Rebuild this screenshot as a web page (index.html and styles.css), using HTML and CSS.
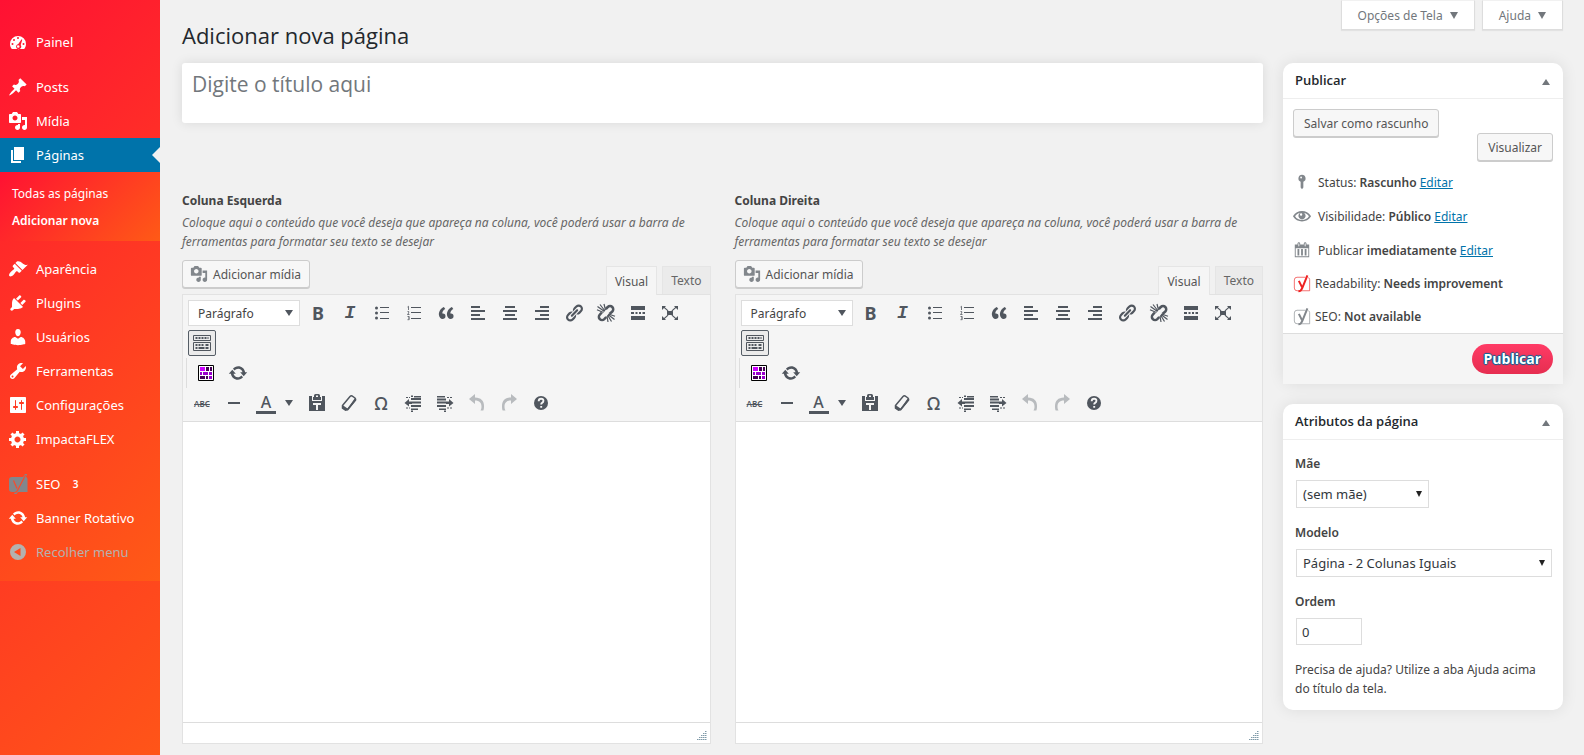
FILE: index.html
```html
<!DOCTYPE html>
<html lang="pt-BR">
<head>
<meta charset="utf-8">
<meta name="viewport" content="width=device-width, initial-scale=1">
<title>Adicionar nova página</title>
<link rel="stylesheet" href="styles.css">
</head>
<body>
<svg class="sprite" aria-hidden="true">
  <symbol id="i-dashboard" viewBox="0 0 20 20"><path fill-rule="evenodd" d="M3.8 17h12.4c1.3-1.600 1.800-3.400 1.800-5a8 8 0 1 0-16 0c0 1.600.5 3.400 1.800 5zM9 6a1 1 0 1 1 2 0 1 1 0 0 1-2 0zM5 8a1 1 0 1 1 2 0 1 1 0 0 1-2 0zM3.500 12a1 1 0 1 1 2 0 1 1 0 0 1-2 0zM14.500 12a1 1 0 1 1 2 0 1 1 0 0 1-2 0zM13.600 7.200l.7.500-1.600 5.200a2.600 2.600 0 1 1-2.400-.9zM10.200 13.200a1.300 1.300 0 1 0 .1 2.600 1.300 1.300 0 0 0-.1-2.600z"/></symbol>
  <symbol id="i-pin" viewBox="0 0 20 20"><path d="M10.440 3.020l1.820-1.820 6.360 6.350-1.830 1.820c-1.050-.68-2.480-.57-3.410.36l-.75.75c-.92.93-1.040 2.350-.35 3.410l-1.830 1.820-2.410-2.410-2.800 2.790c-.42.42-3.380 2.710-3.800 2.290s1.860-3.390 2.280-3.810l2.790-2.790L4.100 9.360l1.830-1.820c1.050.69 2.480.57 3.400-.36l.75-.75c.93-.92 1.050-2.350.36-3.410z"/></symbol>
  <symbol id="i-media" viewBox="0 0 20 20"><path d="M13 11V4c0-.55-.45-1-1-1h-1.670L9 1H5L3.670 3H2c-.55 0-1 .45-1 1v7c0 .55.45 1 1 1h10c.55 0 1-.45 1-1zM7 4.500c1.380 0 2.500 1.120 2.500 2.500S8.380 9.500 7 9.500 4.500 8.380 4.500 7 5.620 4.500 7 4.500zM14 6h5v10.500c0 1.380-1.120 2.500-2.500 2.500S14 17.880 14 16.500s1.120-2.500 2.500-2.500c.17 0 .34.02.5.05V9h-3V6zm-4 8.050V13h2v3.500c0 1.380-1.120 2.500-2.500 2.500S7 17.880 7 16.500 8.120 14 9.500 14c.17 0 .34.02.5.05z"/></symbol>
  <symbol id="i-page" viewBox="0 0 20 20"><path d="M6 15V2h10v13H6zm-1 1h8v2H3V5h2v11z"/></symbol>
  <symbol id="i-brush" viewBox="0 0 20 20"><path d="M14.480 11.060L7.410 3.990l1.500-1.500c.5-.56 2.300-.47 3.510.32 1.210.8 1.430 1.280 2.910 2.100 1.180.64 2.450 1.260 4.450.85zm-.71.71L6.700 4.700 4.930 6.470c-.39.39-.39 1.020 0 1.410l1.060 1.060c.39.39.39 1.030 0 1.420-.6.6-1.430 1.110-2.210 1.690-.35.26-.7.53-1.010.84C1.430 14.230.4 16.080 1.400 17.070c.99 1 2.840-.03 4.180-1.360.31-.31.58-.66.85-1.020.57-.78 1.080-1.610 1.690-2.210.39-.39 1.020-.39 1.410 0l1.060 1.060c.39.39 1.020.39 1.410 0z"/></symbol>
  <symbol id="i-plug" viewBox="0 0 20 20"><path d="M13.110 4.360L9.870 7.600 8 5.730l3.240-3.240c.35-.34 1.050-.2 1.560.32.52.51.66 1.210.31 1.550zm-8 1.770l.91-1.120 9.010 9.010-1.190.84c-.71.71-2.630 1.160-3.820 1.160H6.140L4.900 17.260c-.59.59-1.540.59-2.120 0-.59-.58-.59-1.530 0-2.120l1.240-1.240v-3.880c0-1.130.4-3.190 1.090-3.890zm7.260 3.970l3.240-3.240c.34-.35 1.040-.21 1.550.31.52.51.66 1.210.31 1.550l-3.240 3.250z"/></symbol>
  <symbol id="i-user" viewBox="0 0 20 20"><path d="M10 9.250c-2.270 0-2.730-3.440-2.730-3.440C7 4.020 7.820 2 9.970 2c2.160 0 2.980 2.020 2.710 3.810 0 0-.41 3.440-2.680 3.440zm0 2.570L12.720 10c2.390 0 4.520 2.330 4.520 4.530v2.490s-3.650 1.130-7.240 1.130c-3.650 0-7.240-1.130-7.240-1.130v-2.490c0-2.250 1.940-4.480 4.470-4.480z"/></symbol>
  <symbol id="i-tools" viewBox="0 0 20 20"><path d="M16.680 9.770c-1.340 1.340-3.300 1.670-4.950.99l-5.410 6.520c-.99.99-2.590.99-3.580 0s-.99-2.590 0-3.570l6.520-5.420c-.68-1.650-.35-3.610.99-4.950 1.280-1.280 3.120-1.620 4.720-1.060l-2.890 2.890 2.820 2.820 2.860-2.870c.53 1.580.18 3.390-1.080 4.650zM3.810 16.210c.4.39 1.040.39 1.430 0 .4-.4.4-1.040 0-1.430-.39-.4-1.030-.4-1.430 0-.39.39-.39 1.030 0 1.430z"/></symbol>
  <symbol id="i-settings" viewBox="0 0 20 20"><path d="M18 17V3c0-.55-.45-1-1-1H3c-.55 0-1 .45-1 1v14c0 .55.45 1 1 1h14c.55 0 1-.45 1-1zM8 11h1c.55 0 1 .45 1 1s-.45 1-1 1H8v1.500c0 .28-.22.5-.5.5s-.5-.22-.5-.5V13H6c-.55 0-1-.45-1-1s.45-1 1-1h1V5.500c0-.28.22-.5.5-.5s.5.22.5.5V11zm5-2h-1c-.55 0-1-.45-1-1s.45-1 1-1h1V5.500c0-.28.22-.5.5-.5s.5.22.5.5V7h1c.55 0 1 .45 1 1s-.45 1-1 1h-1v5.500c0 .28-.22.5-.5.5s-.5-.22-.5-.5V9z"/></symbol>
  <symbol id="i-gear" viewBox="0 0 20 20"><path d="M18 12h-2.180c-.17.7-.44 1.350-.81 1.930l1.540 1.540-2.100 2.100-1.540-1.540c-.58.36-1.230.63-1.910.79V19H8v-2.180c-.68-.16-1.330-.43-1.910-.79l-1.540 1.540-2.120-2.120 1.540-1.540c-.36-.58-.63-1.230-.79-1.910H1V9.030h2.170c.16-.7.44-1.350.8-1.940L2.430 5.550l2.100-2.100 1.540 1.540c.58-.37 1.240-.64 1.930-.81V2h3v2.180c.68.16 1.330.43 1.910.79l1.540-1.540 2.120 2.120-1.540 1.540c.36.59.64 1.240.8 1.940H18V12zm-8.500 1.500c1.660 0 3-1.340 3-3s-1.340-3-3-3-3 1.340-3 3 1.340 3 3 3z"/></symbol>
  <symbol id="i-update" viewBox="0 0 20 20"><path d="M10.200 3.280c3.530 0 6.430 2.610 6.920 6h2.080l-3.500 4-3.500-4h2.320c-.45-1.970-2.210-3.450-4.320-3.450-1.450 0-2.730.71-3.540 1.780L4.950 5.660C6.230 4.200 8.110 3.280 10.200 3.280zm-.4 13.440c-3.520 0-6.430-2.610-6.920-6H.8l3.500-4c1.170 1.330 2.330 2.670 3.500 4H5.480c.45 1.970 2.210 3.450 4.320 3.450 1.450 0 2.730-.71 3.540-1.780l1.710 1.950c-1.280 1.460-3.150 2.380-5.250 2.380z"/></symbol>
  <symbol id="i-collapse" viewBox="0 0 20 20"><path fill-rule="evenodd" d="M10 2a8 8 0 1 1 0 16 8 8 0 0 1 0-16zm2.500 4L6 10l6.500 4z"/></symbol>
  <symbol id="i-yoast" viewBox="0 0 20 20"><path fill="#82878c" d="M4 3h11l2-3h2l-1 3q1.500.5 1.500 2v13H10l-1.500 2H6l1-2H4q-3 0-3-3V6q0-3 3-3z"/><path d="M5.500 6.500l3.500 8M17.500 1L9.500 16.500q-1 2-3 2" fill="none" stroke="#fa4a2b" stroke-width="1.200"/></symbol>
  <symbol id="i-yoast-line" viewBox="0 0 20 20"><path d="M14 2.500H4.500q-3 0-3 3v9q0 3 3 3H18.500V5q0-1.500-1.500-2" fill="none" stroke="currentColor" opacity=".7"/><path d="M6.500 6.500l3.500 7M16 .5L10.500 14q-1.500 4-4.500 4.200" fill="none" stroke="currentColor" stroke-width="2.200"/></symbol>
  <symbol id="i-status" viewBox="0 0 20 20"><path fill-rule="evenodd" d="M10 2a4 4 0 0 1 1.500 7.700V16L10 18l-1.500-2V9.700A4 4 0 0 1 10 2zM9 4a1 1 0 1 0 0 2 1 1 0 0 0 0-2z"/></symbol>
  <symbol id="i-eye" viewBox="0 0 20 20"><path fill-rule="evenodd" d="M19.700 9.600C17.700 6.400 14 4.500 10 4.500S2.300 6.400.3 9.600L0 10.200l.3.6c2 3.200 5.700 5.200 9.700 5.200s7.700-2 9.700-5.200l.3-.6zM10 14.500c-3.100 0-6-1.600-7.700-4.300C3.600 8.200 5.700 6.800 8 6.300a4 4 0 1 0 4 0c2.300.5 4.400 1.900 5.700 3.900-1.700 2.700-4.600 4.300-7.700 4.300zM9 7a1.300 1.300 0 1 1 0 2.600A1.300 1.300 0 0 1 9 7z"/></symbol>
  <symbol id="i-calendar" viewBox="0 0 20 20"><path d="M15 4h3v14H2V4h3V3c0-.83.67-1.500 1.500-1.500S8 2.170 8 3v1h4V3c0-.83.67-1.500 1.500-1.500S15 2.170 15 3v1zM6 3v2.500c0 .28.22.5.5.5s.5-.22.5-.5V3c0-.28-.22-.5-.5-.5S6 2.720 6 3zm7 0v2.500c0 .28.22.5.5.5s.5-.22.5-.5V3c0-.28-.22-.5-.5-.5s-.5.22-.5.5zm4 14V8H3v9h14zM7 16V9H5v7h2zm4 0V9H9v7h2zm4 0V9h-2v7h2z"/></symbol>
  <symbol id="i-ul" viewBox="0 0 20 20"><circle cx="4.500" cy="5" r="1.500"/><circle cx="4.500" cy="10" r="1.500"/><circle cx="4.500" cy="15" r="1.500"/><path d="M8 4h9v1H8zM8 9h9v1H8zM8 15h9v1H8z"/></symbol>
  <symbol id="i-ol" viewBox="0 0 20 20"><path d="M7 4h10v1H7zM7 9h10v1H7zM7 15h10v1H7z"/><path d="M3.500 4l1-.7V7M3.500 8.500h1.200V10l-1.200 1.500h2M3.500 13.500h1.700v3.200H3.500M4 15h1" fill="none" stroke="currentColor" stroke-width=".8"/></symbol>
  <symbol id="i-quote" viewBox="0 0 20 20"><path d="M9.490 13.220c0-.74-.2-1.380-.61-1.900-.62-.78-1.830-.88-2.530-.72-.29-1.650 1.110-3.750 2.920-4.650L7.880 4c-2.730 1.300-5.420 4.280-4.960 8.050C3.210 14.430 4.590 16 6.540 16c.85 0 1.560-.25 2.120-.75s.83-1.180.83-2.030zm8.050 0c0-.74-.2-1.380-.61-1.900-.63-.78-1.830-.88-2.530-.72-.29-1.650 1.110-3.750 2.920-4.650L15.930 4c-2.730 1.300-5.410 4.280-4.950 8.050.29 2.380 1.660 3.950 3.610 3.950.85 0 1.560-.25 2.120-.75s.83-1.180.83-2.030z"/></symbol>
  <symbol id="i-left" viewBox="0 0 20 20"><path d="M3 3h9v2H3zM3 7h14v2H3zM3 11h9v2H3zM3 15h14v2H3z"/></symbol>
  <symbol id="i-center" viewBox="0 0 20 20"><path d="M5 3h10v2H5zM3 7h14v2H3zM5 11h10v2H5zM3 15h14v2H3z"/></symbol>
  <symbol id="i-right" viewBox="0 0 20 20"><path d="M8 3h9v2H8zM3 7h14v2H3zM8 11h9v2H8zM3 15h14v2H3z"/></symbol>
  <symbol id="i-link" viewBox="0 0 20 20"><path d="M17.740 2.760c1.680 1.690 1.680 4.410 0 6.100l-1.530 1.520c-1.120 1.120-2.700 1.470-4.140 1.090l2.620-2.610.76-.77.76-.76c.84-.84.84-2.200 0-3.040-.84-.85-2.200-.85-3.040 0l-.77.76-3.380 3.380c-.37-1.440-.02-3.020 1.100-4.140l1.520-1.530c1.690-1.680 4.420-1.680 6.100 0zM8.590 13.430l5.340-5.340c.42-.42.42-1.100 0-1.520-.44-.43-1.130-.39-1.530 0l-5.330 5.340c-.42.42-.42 1.100 0 1.520.44.43 1.130.39 1.520 0zm-.76 2.290l4.140-4.150c.38 1.440.03 3.020-1.090 4.140l-1.520 1.530c-1.690 1.680-4.410 1.680-6.100 0-1.680-1.680-1.680-4.420 0-6.100l1.530-1.520c1.120-1.120 2.700-1.470 4.140-1.100l-4.140 4.150c-.85.84-.85 2.200 0 3.050.84.84 2.200.84 3.040 0z"/></symbol>
  <symbol id="i-unlink" viewBox="0 0 20 20"><path d="M9.800 6l2-2a3.200 3.200 0 0 1 4.500 0 3.200 3.200 0 0 1 0 4.500L13.500 11M5.800 9.500l-2 2.200a3.200 3.200 0 0 0 0 4.500 3.200 3.200 0 0 0 4.500 0l2-2.200" fill="none" stroke="currentColor" stroke-width="2.500"/><path d="M8.500 8.500L1.500 3.500M9 8L4 1.500M9.500 7L8 1M7.500 9.500L1 6.800M12 11.500l6.500 5M11.500 12l4 6.500M11 13l1 6M12.500 11l6.500 2.200" stroke="currentColor" stroke-width="1.200"/></symbol>
  <symbol id="i-more" viewBox="0 0 20 20"><path d="M3 3h14v4H3zM3 9h3v2H3zM7.500 9h2v2h-2zM11 9h2v2h-2zM14.500 9H17v2h-2.500zM3 13h14v4H3z"/></symbol>
  <symbol id="i-full" viewBox="0 0 20 20"><path d="M7 8h6v4H7zM2 3h4L4.800 4.200 8.500 7.500l-.8.8L4 5 2 7zM18 3h-4l1.200 1.200L11.500 7.500l.8.8L16 5l2 2zM2 17h4l-1.200-1.200 3.700-3.300-.8-.8L4 15l-2-2zM18 17h-4l1.200-1.200-3.700-3.300.8-.8L16 15l2-2z"/></symbol>
  <symbol id="i-kitchen" viewBox="0 0 20 20"><path d="M1.500 2.500h17v5h-17zM1.500 9.500h17v8h-17z" fill="none" stroke="currentColor"/><path d="M3.500 5h13M3.500 12h9" stroke="currentColor" stroke-width="2" stroke-dasharray="2 1"/><path d="M13.500 12h3M3.500 15h2M6.500 15h6M13.500 15h3" stroke="currentColor" stroke-width="1.800"/></symbol>
  <symbol id="i-blocks" viewBox="0 0 20 20"><path fill="#fff" stroke="#000" d="M2.500 2.500h15v15h-15z"/><path fill="#c0f" d="M4 4h5v4H4z"/><path fill="#405" d="M10 4h3v4h-3zM14 4h2v4h-2zM4 13h5v3H4zM10 13h2v3h-2z"/><path fill="#90c" d="M4 9h2v3H4zM7 9h5v3H7zM13 9h3v3h-3zM13 13h3v3h-3z"/></symbol>
  <symbol id="i-hr" viewBox="0 0 20 20"><path d="M4 9h12v2H4z"/></symbol>
  <symbol id="i-paste" viewBox="0 0 20 20"><path fill-rule="evenodd" d="M7 4V2.500Q7 1 8.500 1h3Q13 1 13 2.500V4h1v3H6V4zm2 0h2V2.500H9zM2 3h3v5h10V3h3v15H2zM6 10v2h3v5h2v-5h3v-2z"/></symbol>
  <symbol id="i-eraser" viewBox="0 0 20 20"><path d="M3.500 12.500L11 3.500Q12 2.500 13 3l3 2q1 1 .3 2L9 16l-2.500 1.200-3-2z" fill="none" stroke="currentColor" stroke-width="1.500"/><path d="M3.500 12l5 3.500-2 2-3.500-2.500zM16 5l1.500 2L9 17.500l-2 .2z"/></symbol>
  <symbol id="i-outdent" viewBox="0 0 20 20"><path d="M8 2.500h2V4H8zM8 5h10v2H8zM8 8.500h10v2H8zM8 12h10v2H8zM11 3h7v1.500h-7zM8 15.500h7V17H8zM8 17.500h2V19H8zM6 6v2.500h3v2.500H6v2.500L1.500 10z"/><path d="M3 4.500h4M3 15h4" stroke="currentColor" stroke-dasharray="2 1"/></symbol>
  <symbol id="i-indent" viewBox="0 0 20 20"><path d="M2 3h8v1.500H2zM2 5.500h9v2H2zM2 8.500h9v2H2zM2 12h9v2H2zM4 15.500h7V17H4zM9 17.500h2V19H9zM14 6v2.500h-3v2.500h3v2.500l4.500-3.500z"/><path d="M12 4.500h5M12 15h5" stroke="currentColor" stroke-dasharray="2 1"/></symbol>
  <symbol id="i-undo" viewBox="0 0 20 20"><path d="M8 1v3.500c6 0 9 3.500 9 8.500 0 2-.2 3.500-.7 4.500h-2.800c.8-1.500 1-2.500 1-4C14.500 10 12.500 7.500 8 7.500V11L2 6z"/></symbol>
  <symbol id="i-redo" viewBox="0 0 20 20"><path d="M12 1v3.500c-6 0-9 3.500-9 8.500 0 2 .2 3.500.7 4.500h2.800c-.8-1.500-1-2.500-1-4C5.500 10 7.500 7.500 12 7.500V11l6-5z"/></symbol>
  <symbol id="i-help" viewBox="0 0 20 20"><circle cx="10" cy="10" r="7"/><path d="M7.700 8.200q0-2.400 2.400-2.400t2.300 2q0 1.300-1.300 2-.9.500-.9 1.700M10.200 13v1.800" fill="none" stroke="#f5f5f5" stroke-width="1.900"/></symbol>
</svg>

<div class="layout">
  <aside class="sidebar">
    <nav class="menu" aria-label="Menu principal">
      <ul class="menu-group">
        <li><a class="menu-item" href="#"><svg class="icon"><use href="#i-dashboard"/></svg>Painel</a></li>
      </ul>
      <ul class="menu-group">
        <li><a class="menu-item" href="#"><svg class="icon"><use href="#i-pin"/></svg>Posts</a></li>
        <li><a class="menu-item" href="#"><svg class="icon"><use href="#i-media"/></svg>Mídia</a></li>
        <li>
          <a class="menu-item current" href="#"><svg class="icon"><use href="#i-page"/></svg>Páginas</a>
          <ul class="submenu">
            <li><a class="submenu-item" href="#">Todas as páginas</a></li>
            <li><a class="submenu-item active" href="#" aria-current="page">Adicionar nova</a></li>
          </ul>
        </li>
      </ul>
      <ul class="menu-group">
        <li><a class="menu-item" href="#"><svg class="icon"><use href="#i-brush"/></svg>Aparência</a></li>
        <li><a class="menu-item" href="#"><svg class="icon"><use href="#i-plug"/></svg>Plugins</a></li>
        <li><a class="menu-item" href="#"><svg class="icon"><use href="#i-user"/></svg>Usuários</a></li>
        <li><a class="menu-item" href="#"><svg class="icon"><use href="#i-tools"/></svg>Ferramentas</a></li>
        <li><a class="menu-item" href="#"><svg class="icon"><use href="#i-settings"/></svg>Configurações</a></li>
        <li><a class="menu-item" href="#"><svg class="icon"><use href="#i-gear"/></svg>ImpactaFLEX</a></li>
      </ul>
      <ul class="menu-group">
        <li><a class="menu-item" href="#"><svg class="icon"><use href="#i-yoast"/></svg>SEO<span class="count">3</span></a></li>
        <li><a class="menu-item" href="#"><svg class="icon"><use href="#i-update"/></svg>Banner Rotativo</a></li>
        <li><button type="button" class="menu-item collapse"><svg class="icon"><use href="#i-collapse"/></svg>Recolher menu</button></li>
      </ul>
    </nav>
  </aside>

  <div class="page">
    <header class="page-head">
      <h1 class="page-title">Adicionar nova página</h1>
      <div class="screen-meta">
        <button type="button" class="meta-btn">Opções de Tela<span class="caret"></span></button>
        <button type="button" class="meta-btn">Ajuda<span class="caret"></span></button>
      </div>
    </header>

    <div class="content">
      <main class="main">
        <div class="title-box">
          <input class="title-input" type="text" placeholder="Digite o título aqui" aria-label="Digite o título aqui">
        </div>
        <div class="editors">
          <section class="editor-col">
            <h2 class="field-title">Coluna Esquerda</h2>
            <p class="field-desc">Coloque aqui o conteúdo que você deseja que apareça na coluna, você poderá usar a barra de ferramentas para formatar seu texto se desejar</p>
          </section>
          <section class="editor-col">
            <h2 class="field-title">Coluna Direita</h2>
            <p class="field-desc">Coloque aqui o conteúdo que você deseja que apareça na coluna, você poderá usar a barra de ferramentas para formatar seu texto se desejar</p>
          </section>
        </div>
      </main>

      <aside class="side">
        <section class="box">
          <header class="box-head"><h2 class="box-title">Publicar</h2><button type="button" class="toggle" aria-label="Alternar painel Publicar"></button></header>
          <div class="publish-actions">
            <button type="button" class="btn">Salvar como rascunho</button>
            <button type="button" class="btn preview">Visualizar</button>
          </div>
          <ul class="publish-info">
            <li><svg class="icon"><use href="#i-status"/></svg><span>Status: <b>Rascunho</b> <a href="#">Editar</a></span></li>
            <li><svg class="icon"><use href="#i-eye"/></svg><span>Visibilidade: <b>Público</b> <a href="#">Editar</a></span></li>
            <li><svg class="icon"><use href="#i-calendar"/></svg><span>Publicar <b>imediatamente</b> <a href="#">Editar</a></span></li>
            <li class="seo bad"><svg class="icon"><use href="#i-yoast-line"/></svg><span>Readability: <b>Needs improvement</b></span></li>
            <li class="seo"><svg class="icon"><use href="#i-yoast-line"/></svg><span>SEO: <b>Not available</b></span></li>
          </ul>
          <footer class="publish-foot"><button type="submit" class="publish-btn">Publicar</button></footer>
        </section>

        <section class="box">
          <header class="box-head"><h2 class="box-title">Atributos da página</h2><button type="button" class="toggle" aria-label="Alternar painel Atributos da página"></button></header>
          <div class="attributes">
            <label class="attr-label" for="parent">Mãe</label>
            <select class="select parent" id="parent"><option>(sem mãe)</option></select>
            <label class="attr-label" for="template">Modelo</label>
            <select class="select" id="template"><option>Página - 2 Colunas Iguais</option></select>
            <label class="attr-label" for="order">Ordem</label>
            <input class="order" id="order" type="text" value="0">
            <p class="help">Precisa de ajuda? Utilize a aba Ajuda acima do título da tela.</p>
          </div>
        </section>
      </aside>
    </div>
  </div>
</div>

<template id="editor">
  <div class="editor-tools">
    <button type="button" class="btn media-btn"><svg class="icon"><use href="#i-media"/></svg>Adicionar mídia</button>
    <div class="tabs">
      <button type="button" class="tab selected">Visual</button>
      <button type="button" class="tab">Texto</button>
    </div>
  </div>
  <div class="editor">
    <div class="toolbar">
      <div class="row">
        <select class="format" aria-label="Formato"><option>Parágrafo</option></select>
        <button type="button" class="tool bold" aria-label="Negrito">B</button>
        <button type="button" class="tool italic" aria-label="Itálico">I</button>
        <button type="button" class="tool" aria-label="Lista com marcadores"><svg class="icon"><use href="#i-ul"/></svg></button>
        <button type="button" class="tool" aria-label="Lista numerada"><svg class="icon"><use href="#i-ol"/></svg></button>
        <button type="button" class="tool" aria-label="Citação"><svg class="icon"><use href="#i-quote"/></svg></button>
        <button type="button" class="tool" aria-label="Alinhar à esquerda"><svg class="icon"><use href="#i-left"/></svg></button>
        <button type="button" class="tool" aria-label="Centralizar"><svg class="icon"><use href="#i-center"/></svg></button>
        <button type="button" class="tool" aria-label="Alinhar à direita"><svg class="icon"><use href="#i-right"/></svg></button>
        <button type="button" class="tool" aria-label="Inserir link"><svg class="icon"><use href="#i-link"/></svg></button>
        <button type="button" class="tool" aria-label="Remover link"><svg class="icon"><use href="#i-unlink"/></svg></button>
        <button type="button" class="tool" aria-label="Leia mais"><svg class="icon"><use href="#i-more"/></svg></button>
        <button type="button" class="tool" aria-label="Tela cheia"><svg class="icon"><use href="#i-full"/></svg></button>
      </div>
      <div class="row">
        <button type="button" class="tool pressed" aria-pressed="true" aria-label="Alternar barra"><svg class="icon"><use href="#i-kitchen"/></svg></button>
      </div>
      <div class="row plugins">
        <button type="button" class="tool" aria-label="Blocos"><svg class="icon"><use href="#i-blocks"/></svg></button>
        <button type="button" class="tool" aria-label="Banner"><svg class="icon"><use href="#i-update"/></svg></button>
      </div>
      <div class="row">
        <button type="button" class="tool strike" aria-label="Tachado">ABC</button>
        <button type="button" class="tool" aria-label="Linha horizontal"><svg class="icon"><use href="#i-hr"/></svg></button>
        <div class="split">
          <button type="button" class="tool" aria-label="Cor do texto"><span class="color-letter">A</span></button>
          <button type="button" class="tool arrow" aria-label="Escolher cor"><span class="caret"></span></button>
        </div>
        <button type="button" class="tool" aria-label="Colar como texto"><svg class="icon"><use href="#i-paste"/></svg></button>
        <button type="button" class="tool" aria-label="Limpar formatação"><svg class="icon"><use href="#i-eraser"/></svg></button>
        <button type="button" class="tool omega" aria-label="Caractere especial">Ω</button>
        <button type="button" class="tool" aria-label="Diminuir recuo"><svg class="icon"><use href="#i-outdent"/></svg></button>
        <button type="button" class="tool" aria-label="Aumentar recuo"><svg class="icon"><use href="#i-indent"/></svg></button>
        <button type="button" class="tool" disabled aria-label="Desfazer"><svg class="icon"><use href="#i-undo"/></svg></button>
        <button type="button" class="tool" disabled aria-label="Refazer"><svg class="icon"><use href="#i-redo"/></svg></button>
        <button type="button" class="tool" aria-label="Ajuda do teclado"><svg class="icon"><use href="#i-help"/></svg></button>
      </div>
    </div>
    <textarea class="canvas" rows="15"></textarea>
    <div class="statusbar"><svg class="grip" viewBox="0 0 10 10"><path d="M8 .5h2M6 2.500h4M4 4.500h6M2 6.500h8M0 8.500h10" stroke="#7f9aa8" stroke-dasharray="1.500 .5"/></svg></div>
  </div>
</template>
<script src="editor.js"></script>
</body>
</html>
```
FILE: styles.css
```css
* { box-sizing: border-box; }

body {
  margin: 0;
  background: #f1f1f1;
  color: #444;
  font: 12px/19px "Noto Sans", "Open Sans", sans-serif;
}

h1, h2, p, ul { margin: 0; padding: 0; }
ul { list-style: none; }
a { color: #0073aa; }
b { font-weight: 600; }
button, input, select, textarea { font: inherit; color: inherit; margin: 0; }
button { cursor: pointer; }

.sprite { display: none; }
.icon { width: 20px; height: 20px; flex: none; fill: currentColor; }

.layout { display: flex; min-height: 100vh; }

/* Sidebar */
.sidebar { width: 160px; flex: none; background: linear-gradient(135deg, #ff1133, #ff5518); }
.menu { padding: 25px 0 12px; background: linear-gradient(135deg, #ff1133, #ff5a16); }
.menu-group + .menu-group { margin-top: 11px; }
.menu-item {
  display: flex;
  align-items: center;
  gap: 8px;
  width: 100%;
  height: 34px;
  padding: 0 8px;
  border: 0;
  background: none;
  color: #fff;
  font-size: 13px;
  text-decoration: none;
  white-space: nowrap;
}
.menu-item.current { position: relative; background: #0073aa; }
.menu-item.current::after {
  content: "";
  position: absolute;
  right: 0;
  top: 9px;
  border: 8px solid transparent;
  border-left-width: 0;
  border-right-color: #f1f1f1;
}
.menu-item.collapse { color: #b4b1ae; }
.count { width: 14px; font-size: 10px; font-weight: 600; text-align: center; }
.submenu { padding: 8px 0 7px; background: linear-gradient(135deg, #ff1133, #ff5a16); }
.submenu-item {
  display: block;
  padding: 4px 12px;
  color: #fff;
  text-decoration: none;
}
.submenu-item.active { font-weight: 600; }

/* Page header */
.page { flex: 1; min-width: 0; padding: 0 21px 0 22px; }
.page-head { display: flex; justify-content: space-between; align-items: flex-start; height: 63px; }
.page-title { padding-top: 20px; font: 400 22px/30px "Open Sans", sans-serif; color: #23282d; }
.screen-meta { display: flex; gap: 7px; }
.meta-btn {
  display: flex;
  align-items: center;
  gap: 7px;
  height: 30px;
  padding: 0 16px;
  border: 1px solid #ddd;
  border-top-color: #f1f1f1;
  background: #fff;
  box-shadow: 0 1px 1px rgba(0, 0, 0, .06);
  color: #72777c;
}
.caret { border: 4px solid transparent; border-top: 6px solid currentColor; border-bottom: 0; }
.meta-btn .caret { border-width: 7px 4px 0; }

.content { display: flex; gap: 20px; align-items: flex-start; }
.main { flex: 1; min-width: 0; }
.title-box {
  height: 60px;
  margin-bottom: 68px;
  border-radius: 3px;
  background: #fff;
  box-shadow: 0 0 12px rgba(0, 0, 0, .1);
}
.title-input {
  width: 100%;
  height: 42px;
  padding: 0 10px;
  border: 0;
  background: none;
  font-family: "Open Sans", sans-serif;
  font-size: 21px;
  outline: 0;
}
.title-input::placeholder { color: #72777c; }

/* Editors */
.editors { display: grid; grid-template-columns: 1fr 1fr; gap: 24px; }
.field-title { margin-bottom: 2px; font-size: 12px; line-height: 20px; font-weight: 700; }
.field-desc { font-style: italic; color: #666; }
.editor-tools { display: flex; justify-content: space-between; align-items: flex-start; height: 43px; padding-top: 9px; }
.btn {
  height: 28px;
  padding: 0 10px;
  border: 1px solid #ccc;
  border-radius: 3px;
  background: #f7f7f7;
  box-shadow: 0 1px 0 #ccc;
  color: #555;
  white-space: nowrap;
}
.media-btn { display: flex; align-items: center; gap: 5px; padding: 0 8px 0 7px; }
.media-btn .icon { width: 18px; height: 18px; color: #82878c; }
.tabs { display: flex; gap: 5px; padding-top: 6px; }
.tab { height: 28px; padding: 0 8px; border: 1px solid #e5e5e5; border-bottom: 0; background: #ebebeb; color: #666; }
.tab.selected { position: relative; height: 29px; background: #f5f5f5; color: #555; }
.editor { border: 1px solid #e2e2e2; }
.toolbar { padding: 3px; border-bottom: 1px solid #ddd; background: #f5f5f5; }
.row { display: flex; align-items: center; height: 30px; padding-left: 2px; gap: 4px; }
.plugins { padding-left: 5px; border-left: 1px solid #ddd; }
.tool {
  display: flex;
  align-items: center;
  justify-content: center;
  flex: none;
  width: 28px;
  height: 26px;
  padding: 0;
  border: 1px solid transparent;
  border-radius: 2px;
  background: none;
  color: #50565e;
}
.tool:disabled { color: #b8bbbe; }
.tool.pressed { border-color: #555d66; background: #ebebeb; }
.bold { font-size: 18px; font-weight: 700; }
.italic { font: italic 700 18px "Liberation Mono", monospace; }
.strike { font-size: 8px; font-weight: 600; text-decoration: line-through; }
.omega { font-size: 18px; font-weight: 500; }
.split { display: flex; width: 47px; }
.color-letter { width: 20px; border-bottom: 3px solid #50565e; font-size: 16px; font-weight: 500; line-height: 18px; }
.arrow { width: 18px; }
.format {
  width: 112px;
  height: 26px;
  padding: 0 9px;
  border: 1px solid #ddd;
  appearance: none;
  background: #fff url("data:image/svg+xml,%3Csvg xmlns='http://www.w3.org/2000/svg' viewBox='0 0 8 6'%3E%3Cpath d='M0 0h8L4 6z' fill='%2350565e'/%3E%3C/svg%3E") right 6px center / 8px 6px no-repeat;
}
.canvas { display: block; width: 100%; height: 300px; border: 0; background: #fff; resize: none; outline: 0; }
.statusbar { display: flex; justify-content: flex-end; align-items: flex-end; height: 21px; padding: 2px 3px; border-top: 1px solid #ddd; background: #fff; }
.grip { width: 10px; height: 10px; }

/* Side boxes */
.side { width: 280px; flex: none; display: flex; flex-direction: column; gap: 20px; }
.box { border-radius: 10px; background: #fff; box-shadow: 0 0 16px rgba(0, 0, 0, .09); }
.box-head { display: flex; justify-content: space-between; align-items: center; height: 36px; padding: 0 12px; border-bottom: 1px solid #eee; }
.box-title { font: 600 13px/19px "Open Sans", sans-serif; color: #23282d; }
.toggle { width: 10px; height: 17px; padding: 3px 0 0; border: 0; background: none; color: #72777c; }
.toggle::before { content: ""; display: block; margin: 0 auto; width: 0; border: 4px solid transparent; border-top: 0; border-bottom: 6px solid currentColor; }
.publish-actions { display: flex; justify-content: space-between; padding: 10px 10px 4px; }
.preview { margin-top: 24px; }
.publish-info li { display: flex; align-items: center; gap: 6px; height: 34px; padding: 0 9px; }
.publish-info .icon { width: 18px; height: 18px; margin: 0 1px; color: #82878c; }
.publish-info .seo { height: 33px; gap: 3px; }
.publish-info .bad .icon { color: #e22; }
.publish-foot { display: flex; justify-content: flex-end; padding: 10px; border-top: 1px solid #ddd; background: #f5f5f5; }
.publish-btn {
  height: 30px;
  padding: 0 12px 2px;
  border: 0;
  border-radius: 15px;
  background: linear-gradient(#ff3b66, #e62e50);
  color: #fff;
  font: 700 14px/19px "Open Sans", sans-serif;
  text-shadow: 0 -1px 1px #006799, 1px 0 1px #006799, 0 1px 1px #006799, -1px 0 1px #006799;
}
.attributes { display: flex; flex-direction: column; align-items: flex-start; padding: 14px 12px 12px; }
.attr-label { font-weight: 600; margin-bottom: 7px; }
.select {
  width: 100%;
  height: 28px;
  margin: 0 0 15px 1px;
  padding: 0 6px;
  border: 1px solid #ddd;
  appearance: none;
  font-size: 13px;
  color: #32373c;
  background: #fff url("data:image/svg+xml,%3Csvg xmlns='http://www.w3.org/2000/svg' viewBox='0 0 6 6'%3E%3Cpath d='M0 0h6L3 6z' fill='%23222'/%3E%3C/svg%3E") right 6px center / 6px 6px no-repeat;
}
.parent { width: 133px; }
.order { width: 66px; height: 27px; margin: 0 0 15px 1px; padding: 0 5px; border: 1px solid #ddd; background: #fff; font-size: 13px; color: #32373c; }
```
FILE: editor.js
```js
const template = document.getElementById('editor');

document.querySelectorAll('.editor-col').forEach((column) => {
  const fragment = template.content.cloneNode(true);
  const title = column.querySelector('.field-title').textContent;
  fragment.querySelector('.canvas').setAttribute('aria-label', title);
  column.append(fragment);
});
```
